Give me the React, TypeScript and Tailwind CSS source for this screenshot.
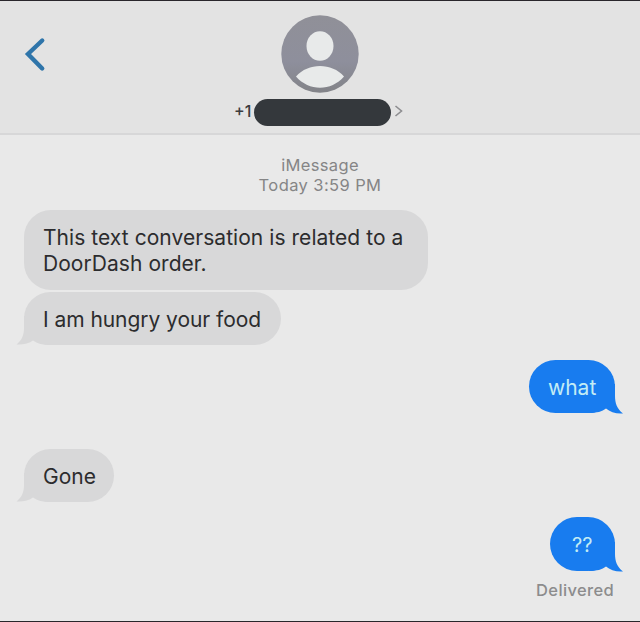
import type { ReactNode } from "react";

function Tail({ side }: { side: "left" | "right" }) {
  return side === "left" ? (
    <svg className="absolute -bottom-px -left-[8px] h-[30px] w-[34px] text-[#d8d8d9]" viewBox="0 0 34 30" fill="currentColor">
      <path d="M8 0V12C8 19 6 24 0.5 28.5C7 29 13 27.5 17 24.5C21 27.5 27 29 34 29V0Z" />
    </svg>
  ) : (
    <svg className="absolute -right-[8px] -bottom-px h-[30px] w-[34px] text-[#187cef]" viewBox="0 0 34 30" fill="currentColor">
      <path d="M26 0V12C26 19 28 25 34 29.5C27 30 21 28 17 24.5C13 27.5 8 29 0 29V0Z" />
    </svg>
  );
}

function Bubble({ side, className, tail = true, children }: { side: "left" | "right"; className: string; tail?: boolean; children: ReactNode }) {
  const tone =
    side === "left"
      ? "ml-6 self-start bg-[#d8d8d9] text-[#2c2c2e]"
      : "mr-[25px] self-end bg-[#187cef] text-[#c3ecf5]";
  return (
    <div className={`relative rounded-[27px] whitespace-nowrap ${tone} ${className}`}>
      {tail && <Tail side={side} />}
      <div className="relative">{children}</div>
    </div>
  );
}

export default function App() {
  return (
    <div className="flex h-[622px] w-[640px] flex-col overflow-hidden border-t border-b border-[#29262b] bg-[#e9e9e9] font-['Inter','Liberation_Sans',sans-serif]">
      <header className="flex h-[134px] shrink-0 border-b-2 border-[#d7d7d8] bg-[#e3e3e3]">
        <div className="w-[220px] pt-[35px] pl-[24px]">
          <svg className="h-[36px] w-[22px]" viewBox="0 0 22 36" fill="none" stroke="#2f75aa" strokeWidth="4.4" strokeLinecap="round" strokeLinejoin="miter">
            <path d="M18.2 4.5L4 18L18.2 32.5" />
          </svg>
        </div>
        <div className="flex w-[200px] flex-col items-center pt-[14px]">
          <svg className="h-[78px] w-[78px] shrink-0" viewBox="0 0 78 78">
            <defs>
              <linearGradient id="avatar" x1="0" y1="0" x2="0" y2="1">
                <stop offset="0" stopColor="#909098" />
                <stop offset="0.6" stopColor="#8e8f9c" />
                <stop offset="1" stopColor="#828388" />
              </linearGradient>
            </defs>
            <circle cx="39" cy="39" r="38.7" fill="url(#avatar)" />
            <ellipse cx="39" cy="31" rx="13.5" ry="14.7" fill="#e8eaea" />
            <path d="M15 61.5C27 47.5 51 47.5 63 61.5C50 76.5 28 76.5 15 61.5Z" fill="#e8eaea" />
          </svg>
          <div className="mt-[6px] flex h-[27px] w-full items-center pl-[14px]">
            <span className="w-[20px] pb-[3px] text-[16px] leading-[24px] font-medium text-[#3c3c3e]">+1</span>
            <span className="h-[27px] w-[137px] rounded-full bg-[#34383c]" />
            <svg className="mb-[3px] ml-[3px] h-[14px] w-[9px]" viewBox="0 0 9 14" fill="none" stroke="#8d8d90" strokeWidth="1.6">
              <path d="M1.5 2L7.5 7L1.5 12" />
            </svg>
          </div>
        </div>
      </header>

      <main className="flex flex-col">
        <div className="mt-[20px] flex flex-col items-center text-[16.5px] leading-[20px] text-[#858586]">
          <span className="tracking-[0.35px]">iMessage</span>
          <span className="tracking-[0.4px]">Today 3:59 PM</span>
        </div>
        <Bubble side="left" tail={false} className="mt-[15px] h-[80px] w-[404px] pt-[15px] pl-[19px] text-[21px] leading-[26px] tracking-[0.05px]">
          This text conversation is related to a<br />DoorDash order.
        </Bubble>
        <Bubble side="left" className="mt-[2px] h-[53px] w-[257px] pt-[15px] pl-[19px] text-[21px] leading-[26px] tracking-[-0.05px]">
          I am hungry your food
        </Bubble>
        <Bubble side="right" className="mt-[15px] h-[53px] w-[86px] pt-[15px] pl-[19px] text-[21px] leading-[26px]">
          what
        </Bubble>
        <Bubble side="left" className="mt-[36px] h-[53px] w-[90px] pt-[15px] pl-[19px] text-[21px] leading-[26px]">
          Gone
        </Bubble>
        <Bubble side="right" className="mt-[15px] h-[54px] w-[65px] pt-[15px] pl-[22px] text-[20px] leading-[26px]">
          ??
        </Bubble>
        <span className="mt-[9px] mr-[26px] self-end text-[16.5px] leading-[20px] font-medium tracking-[0.35px] text-[#8c8c8d]">Delivered</span>
      </main>
    </div>
  );
}
